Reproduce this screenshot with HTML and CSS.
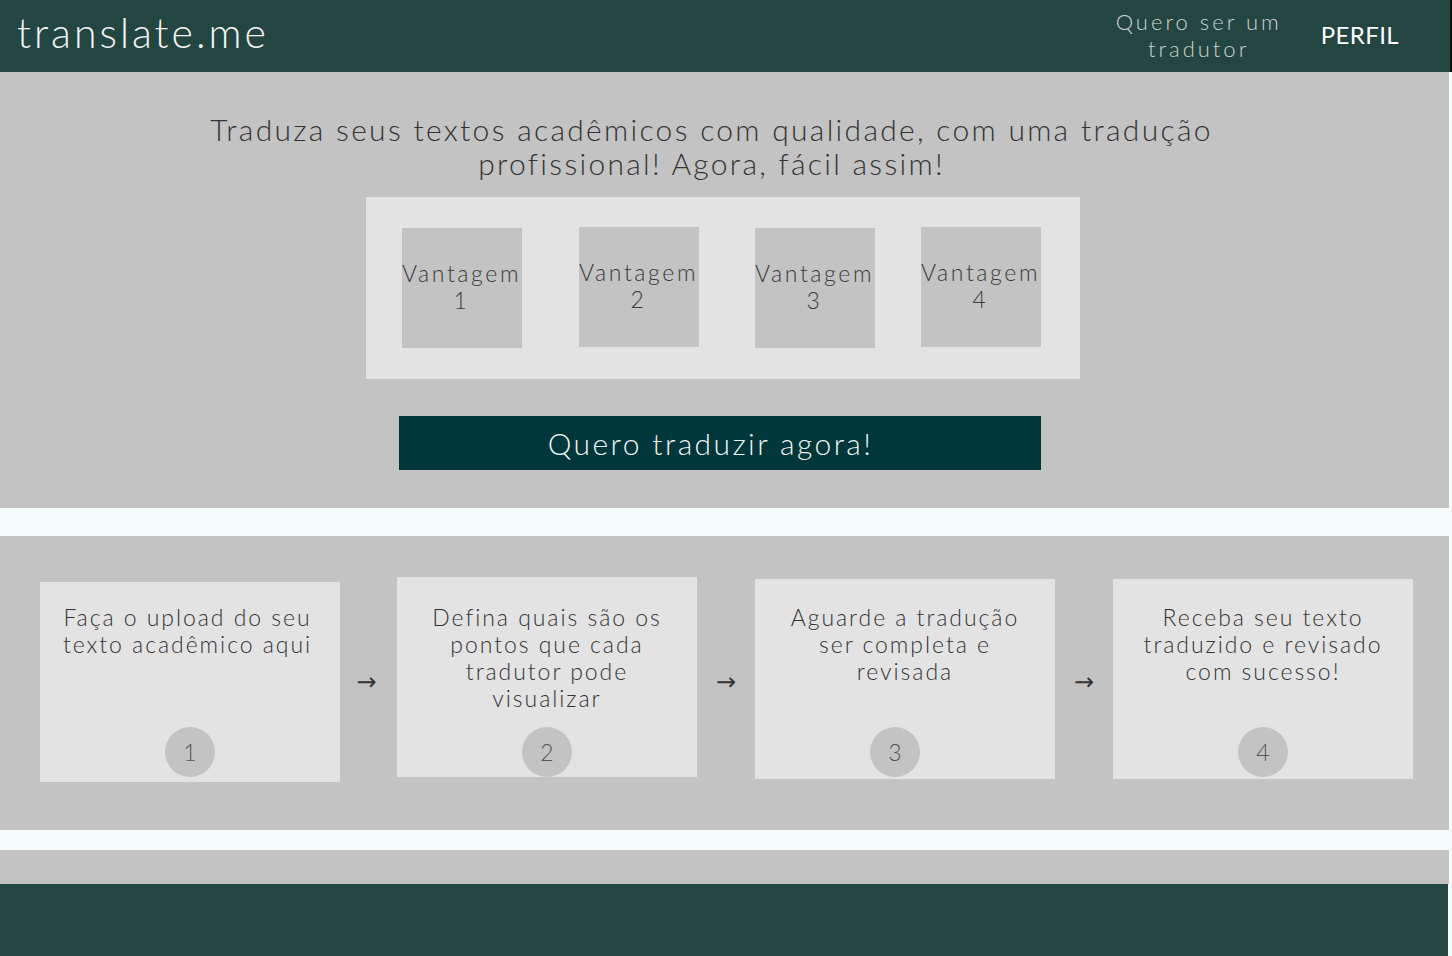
FILE: index.html
```html
<!DOCTYPE html>
<html lang="pt-BR">
<head>
<meta charset="utf-8">
<title>translate.me</title>
<link rel="stylesheet" href="styles.css">
</head>
<body>
<header class="topbar">
  <div class="logo">translate.me</div>
  <nav class="nav">
    <a class="nav-translator" href="#">Quero ser um<br>tradutor</a>
    <a class="nav-profile" href="#">PERFIL</a>
  </nav>
</header>

<section class="hero">
  <h1 class="hero-title">Traduza seus textos acadêmicos com qualidade, com uma tradução<br>profissional! Agora, fácil assim!</h1>
  <div class="advantages">
    <div class="adv adv-1">Vantagem<br>1</div>
    <div class="adv adv-2">Vantagem<br>2</div>
    <div class="adv adv-3">Vantagem<br>3</div>
    <div class="adv adv-4">Vantagem<br>4</div>
  </div>
  <a class="cta" href="#">Quero traduzir agora!</a>
</section>

<div class="spacer spacer-a"></div>

<section class="steps">
  <div class="step step-1">
    <p class="step-text">Faça o upload do seu<br>texto acadêmico aqui</p>
    <span class="step-num">1</span>
  </div>
  <span class="arrow">&rarr;</span>
  <div class="step step-2">
    <p class="step-text">Defina quais são os<br>pontos que cada<br>tradutor pode<br>visualizar</p>
    <span class="step-num">2</span>
  </div>
  <span class="arrow">&rarr;</span>
  <div class="step step-3">
    <p class="step-text">Aguarde a tradução<br>ser completa e<br>revisada</p>
    <span class="step-num">3</span>
  </div>
  <span class="arrow">&rarr;</span>
  <div class="step step-4">
    <p class="step-text">Receba seu texto<br>traduzido e revisado<br>com sucesso!</p>
    <span class="step-num">4</span>
  </div>
</section>

<div class="spacer spacer-b"></div>
<div class="band"></div>
<footer class="footer"></footer>
</body>
</html>
```

FILE: styles.css
```css
html, body {
  margin: 0;
  padding: 0;
}
body {
  background: #f6fbfb;
  font-family: "Lato", "Open Sans", sans-serif;
  font-weight: 300;
  color: #333;
  width: 1452px;
  overflow: hidden;
}

.topbar {
  box-sizing: border-box;
  width: 1452px;
  height: 72px;
  background: #234642;
  border-right: 2px solid #111;
  display: flex;
  align-items: center;
  justify-content: space-between;
}
.logo {
  margin-left: 17px;
  font-size: 41px;
  letter-spacing: 3px;
  color: #f4f4f4;
  line-height: 1;
  padding-bottom: 8px;
}
.nav {
  display: flex;
  align-items: center;
  margin-right: 51px;
  padding-bottom: 3px;
}
.nav-translator {
  display: block;
  width: 180px;
  text-align: center;
  font-size: 22px;
  line-height: 27px;
  letter-spacing: 3px;
  color: #c9d2cf;
  text-decoration: none;
}
.nav-profile {
  margin-left: 32px;
  font-size: 24px;
  font-weight: 400;
  letter-spacing: 0.4px;
  color: #ffffff;
  text-decoration: none;
}

.hero {
  width: 1449px;
  height: 436px;
  background: #c3c3c3;
  display: flex;
  flex-direction: column;
  align-items: center;
  box-sizing: border-box;
  padding-top: 40px;
}
.hero-title {
  margin: 0 0 0 -26px;
  font-size: 30px;
  font-weight: 300;
  line-height: 34px;
  letter-spacing: 2.3px;
  text-align: center;
  color: #333;
  white-space: nowrap;
}
.advantages {
  box-sizing: border-box;
  width: 714px;
  height: 182px;
  margin-top: 17px;
  margin-right: 4px;
  padding: 30px 0 0 36px;
  background: #e3e3e3;
  display: flex;
  align-items: flex-start;
}
.adv {
  flex: none;
  width: 120px;
  height: 120px;
  box-sizing: border-box;
  padding-bottom: 3px;
  background: #c3c3c3;
  display: flex;
  align-items: center;
  justify-content: center;
  text-align: center;
  font-size: 23px;
  line-height: 27px;
  letter-spacing: 2.6px;
  color: #3a3a3a;
  white-space: nowrap;
}
.adv-1 { margin-top: 1px; }
.adv-2 { margin-left: 57px; }
.adv-3 { margin-left: 56px; margin-top: 1px; }
.adv-4 { margin-left: 46px; }

.cta {
  display: flex;
  align-items: center;
  justify-content: center;
  box-sizing: border-box;
  width: 642px;
  height: 54px;
  margin-top: 37px;
  margin-right: 10px;
  padding-right: 18px;
  background: #00373a;
  color: #eef5f4;
  font-size: 30px;
  letter-spacing: 2.4px;
  text-decoration: none;
}

.spacer-a { height: 28px; }
.spacer-b { height: 20px; }

.steps {
  box-sizing: border-box;
  width: 1449px;
  height: 294px;
  background: #c3c3c3;
  padding: 41px 0 0 40px;
  display: flex;
  align-items: flex-start;
}
.step {
  box-sizing: border-box;
  width: 300px;
  height: 200px;
  background: #e3e3e3;
  display: flex;
  flex-direction: column;
  align-items: center;
}
.step-1 { margin-top: 5px; padding: 22px 0 5px; }
.step-2 { margin-top: 0; padding: 27px 0 0; }
.step-3, .step-4 { margin-top: 2px; padding: 25px 0 2px; }
.step-3 .step-num { margin-right: 20px; }
.step-text {
  margin: 0;
  font-size: 23px;
  line-height: 27px;
  letter-spacing: 1.95px;
  text-align: center;
  color: #333;
  white-space: nowrap;
}
.step-1 .step-text { margin-right: 5px; }
.step-num {
  margin-top: auto;
  width: 50px;
  height: 50px;
  border-radius: 50%;
  background: #c3c3c3;
  display: flex;
  align-items: center;
  justify-content: center;
  font-size: 23px;
  color: #555;
}
.arrow {
  width: 58px;
  flex: none;
  text-align: center;
  margin-top: 95px;
  line-height: 20px;
  font-family: "DejaVu Sans", sans-serif;
  font-weight: 400;
  font-size: 24px;
  color: #333;
}
.step-1 + .arrow { width: 57px; padding-right: 4px; box-sizing: border-box; }

.band {
  width: 1449px;
  height: 34px;
  background: #c3c3c3;
}
.footer {
  width: 1448px;
  height: 72px;
  background: #234642;
}
```
